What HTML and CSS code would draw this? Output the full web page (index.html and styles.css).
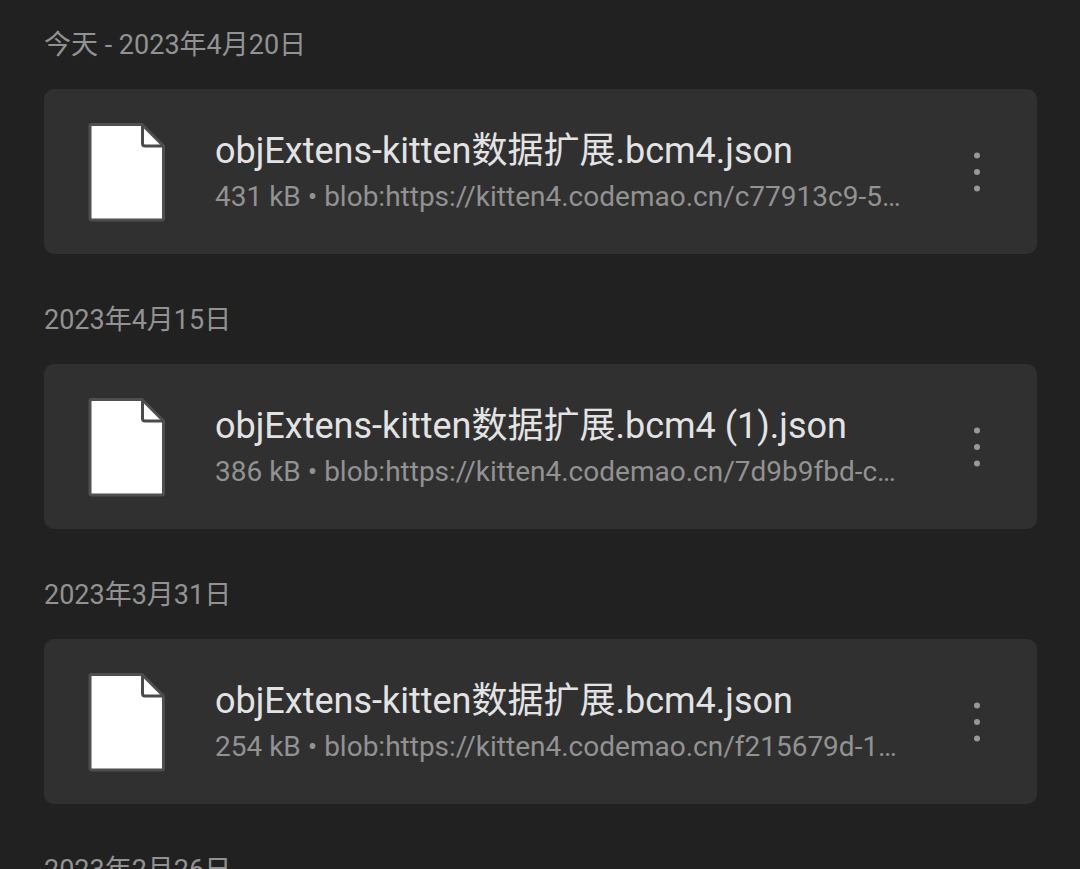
FILE: index.html
```html
<!DOCTYPE html>
<html lang="zh-CN">
<head>
    <meta charset="UTF-8">
    <meta name="viewport" content="width=device-width, initial-scale=1.0">
    <title>下载内容</title>
    <link rel="stylesheet" href="styles.css">
</head>
<body>
    <svg class="sprite" aria-hidden="true">
        <symbol id="file" viewBox="0 0 78 100">
            <path d="M3 2.5H54L75.5 24V96.5Q75.5 98 74 98H4Q2 98 2 96V4Q2 2.5 3 2.5Z" fill="#fff" stroke="#4f4f4f" stroke-width="3" stroke-linejoin="round"/>
            <path d="M54.5 3V21.5Q54.5 24 57 24H75" fill="none" stroke="#4a4a4a" stroke-width="3"/>
        </symbol>
        <symbol id="more" viewBox="0 0 6 40">
            <circle cx="3" cy="3.5" r="3"/>
            <circle cx="3" cy="20" r="3"/>
            <circle cx="3" cy="36.5" r="3"/>
        </symbol>
    </svg>
    <main class="downloads">
        <section class="group">
            <h2 class="date">今天 - 2023年4月20日</h2>
            <div class="card">
                <svg class="file-icon" aria-hidden="true"><use href="#file"/></svg>
                <div class="info">
                    <p class="name">objExtens-kitten数据扩展.bcm4.json</p>
                    <p class="source">431 kB • blob:https://kitten4.codemao.cn/c77913c9-5…</p>
                </div>
                <button class="more" type="button" aria-label="更多选项"><svg class="dots"><use href="#more"/></svg></button>
            </div>
        </section>
        <section class="group">
            <h2 class="date">2023年4月15日</h2>
            <div class="card">
                <svg class="file-icon" aria-hidden="true"><use href="#file"/></svg>
                <div class="info">
                    <p class="name">objExtens-kitten数据扩展.bcm4 (1).json</p>
                    <p class="source">386 kB • blob:https://kitten4.codemao.cn/7d9b9fbd-c…</p>
                </div>
                <button class="more" type="button" aria-label="更多选项"><svg class="dots"><use href="#more"/></svg></button>
            </div>
        </section>
        <section class="group">
            <h2 class="date">2023年3月31日</h2>
            <div class="card">
                <svg class="file-icon" aria-hidden="true"><use href="#file"/></svg>
                <div class="info">
                    <p class="name">objExtens-kitten数据扩展.bcm4.json</p>
                    <p class="source">254 kB • blob:https://kitten4.codemao.cn/f215679d-1…</p>
                </div>
                <button class="more" type="button" aria-label="更多选项"><svg class="dots"><use href="#more"/></svg></button>
            </div>
        </section>
        <section class="group">
            <h2 class="date">2023年2月26日</h2>
        </section>
    </main>
</body>
</html>
```
FILE: styles.css
```css
*{
    margin: 0;
    padding: 0;
    box-sizing: border-box;
}
body{
    background: #212121;
    color: #e3e3e3;
    font-family: Roboto, "Noto Sans CJK SC", sans-serif;
}
.sprite{
    display: none;
}
.downloads{
    display: flex;
    flex-direction: column;
    gap: 47px;
    height: 100vh;
    padding: 26px 43px 0 44px;
    overflow: hidden;
}
.group{
    flex: none;
}
.date{
    margin-bottom: 25px;
    color: #929292;
    font-size: 27px;
    font-weight: 400;
    line-height: 38px;
}
.card{
    display: flex;
    align-items: center;
    padding: 33px 40px 32px 44px;
    background: #303030;
    border-radius: 10px;
}
.file-icon{
    flex: none;
    width: 78px;
    height: 100px;
    margin-right: 49px;
}
.info{
    flex: 1;
    min-width: 0;
    white-space: nowrap;
}
.name{
    overflow: hidden;
    font-size: 36px;
    line-height: 50px;
    text-overflow: ellipsis;
}
.source{
    overflow: hidden;
    color: #929292;
    font-size: 28px;
    line-height: 42px;
    text-overflow: ellipsis;
}
.more{
    flex: none;
    width: 40px;
    height: 64px;
    background: none;
    border: 0;
    cursor: pointer;
}
.dots{
    display: block;
    width: 6px;
    height: 40px;
    margin: 0 auto;
    fill: #989898;
}
```
